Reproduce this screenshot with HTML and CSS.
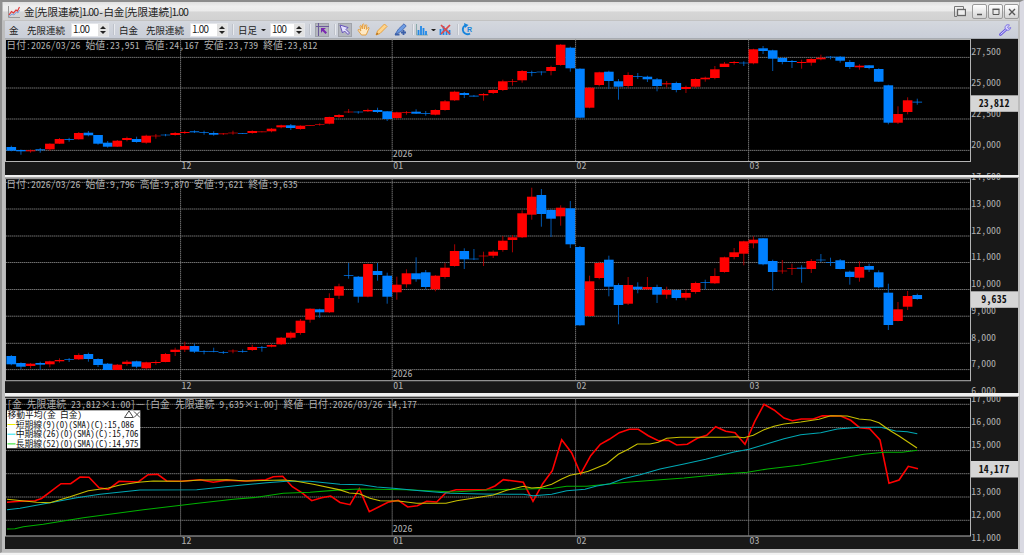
FILE: index.html
```html
<!DOCTYPE html>
<html lang="ja">

<head>
    <meta charset="UTF-8">
    <title>金[先限連続]1.00 - 白金[先限連続]1.00</title>
    <link rel="stylesheet" href="styles.css">
</head>

<body>
    <div class="window">
        <div class="titlebar">
            <svg class="app-icon" width="12" height="12" viewBox="0 0 12 12">
                <path d="M.5 0V11.5H12" fill="none" stroke="#999" />
                <path d="M1 9L3.5 5.5L5.5 7L8 4L9.5 5L11.5 1" fill="none" stroke="#e03838" stroke-width="1.2" />
                <path d="M1 10.5L4 8L6 9L8.5 6L10 7L11.5 4" fill="none" stroke="#7aa0e0" />
            </svg>
            <span class="title">金<b>[</b>先限連続<b>]1.00 - </b>白金<b>[</b>先限連続<b>]1.00</b></span>
            <svg class="dup" width="12" height="12" viewBox="0 0 12 12">
                <path d="M3 10.5H.5V.5H9.5V3" fill="none" stroke="#777" />
                <rect x="3.5" y="3.5" width="8" height="6" fill="#eee" stroke="#666" stroke-width="1.3" />
            </svg>
            <span class="win-btn"><svg width="12" height="12" viewBox="0 0 12 12"><path d="M3 8.5H8" stroke="#555" stroke-width="1.5" /></svg></span>
            <span class="win-btn"><svg width="12" height="12" viewBox="0 0 12 12"><path d="M3 3.5H9V8.500H3Z" fill="none" stroke="#555" /><path d="M2.5 3.3H9.5" stroke="#555" stroke-width="1.5" /></svg></span>
            <span class="win-btn"><svg width="12" height="12" viewBox="0 0 12 12"><path d="M3 3L9 9M9 3L3 9" stroke="#555" stroke-width="1.4" /></svg></span>
        </div>

        <div class="toolbar">
            <span class="label l1">金</span>
            <span class="label l2">先限連続</span>
            <span class="spin">1.00<i></i></span>
            <span class="sep"></span>
            <span class="label l3">白金</span>
            <span class="label l2">先限連続</span>
            <span class="spin">1.00<i></i></span>
            <span class="sep"></span>
            <span class="label l4">日足</span>
            <span class="caret"></span>
            <span class="spin wide">100<i></i></span>
            <span class="sep"></span>
            <span class="tool on"><svg width="13" height="13" viewBox="0 0 13 13"><path d="M0 3.5H13M2.5 0V13" stroke="#6b5a9a" /><path d="M5 5H10L8 6.5L11 9.5L9.5 11L6.5 8L5 10Z" fill="#7a28b0" /></svg></span>
            <span class="sep"></span>
            <span class="tool on"><svg width="13" height="13" viewBox="0 0 13 13"><path d="M2 2L10 4.5L8 6.5L11.5 10L10 11.5L6.5 8L4.5 10Z" fill="#e4e0ff" stroke="#6552b8" /></svg></span>
            <span class="tool"><svg width="13" height="13" viewBox="0 0 13 13"><path d="M4.5 12L1.2 7.500Q.8 6.2 2.2 6.5L3.8 8L3 3Q3.5 1.8 4.5 3L5.3 6L5.5 1.5Q6.3 .3 7 1.5L7.3 6L8.5 2Q9.4 1.2 9.8 2.3L9.3 6.5L11 4.5Q12 4 12 5.2L10 10L9 12Z" fill="#ffe9c4" stroke="#e39a35" stroke-width=".9" /></svg></span>
            <span class="tool"><svg width="13" height="13" viewBox="0 0 13 13"><path d="M1 12L2.5 8L9.5 1L12 3.5L5 10.5Z" fill="#ffd48a" stroke="#e39a35" stroke-width=".9" /><path d="M1 12L2 9.5L3.5 11Z" fill="#a86a20" /></svg></span>
            <span class="tool"><svg width="13" height="13" viewBox="0 0 13 13"><path d="M1 11.5L4.5 6L10 .8L12.2 3L7 8.5Z" fill="#6c9ce4" stroke="#4468b0" stroke-width=".9" /><path d="M1 11.5H5.5M9.5 7V12M7 9.5H12" stroke="#3c60a8" stroke-width="1.8" /></svg></span>
            <span class="sep"></span>
            <span class="tool"><svg width="13" height="13" viewBox="0 0 13 13"><path d="M.5 1V12H12" fill="none" stroke="#8aa" /><path d="M2.5 12V7M5 12V3M7.5 12V5M10 12V8" stroke="#2088e8" stroke-width="1.8" /></svg></span>
            <span class="caret near"></span>
            <span class="tool"><svg width="13" height="13" viewBox="0 0 13 13"><path d="M1.5 12V6M4.5 12V3M7.5 12V5M10.5 12V7" stroke="#2088e8" stroke-width="1.8" /><path d="M2 2L11 11M11 2L2 11" stroke="#e04848" stroke-width="1.7" /></svg></span>
            <span class="sep"></span>
            <span class="tool"><svg width="13" height="13" viewBox="0 0 13 13"><path d="M4 2.5A4.6 4.6 0 1 0 9 10.5" fill="none" stroke="#1684dc" stroke-width="1.9" /><path d="M3 0L7.5 2L4 5Z" fill="#1684dc" /><text class="r" x="6" y="9">R</text></svg></span>
            <svg class="wrench" width="13" height="12" viewBox="0 0 13 12"><path d="M1.5 10.5L7 5.5" stroke="#6a5ae0" stroke-width="2.8" stroke-linecap="round" /><path d="M1.5 10.5L7 5.5" stroke="#ddd8ff" /><path d="M10.5 1.2A2.8 2.8 0 1 0 11.7 3.5L9.5 4.5L8.5 3Z" fill="#d8d4ff" stroke="#7466e0" stroke-width=".9" /></svg>
        </div>

        <svg class="panel" id="gold" width="1013" height="136" viewBox="5 39 1013 136"></svg>
        <div class="split"></div>
        <svg class="panel" id="platinum" width="1013" height="215" viewBox="5 178 1013 215"></svg>
        <div class="split"></div>
        <svg class="panel" id="spread" width="1013" height="152" viewBox="5 397 1013 152"></svg>
    </div>

    <script src="chart.js"></script>
</body>

</html>
```
FILE: styles.css
```css
* {
    box-sizing: border-box;
}

body {
    margin: 0;
    width: 1024px;
    height: 555px;
    overflow: hidden;
    background: #f2f2f2;
    font-family: "Noto Sans CJK JP", sans-serif;
    color: #222;
}

.window {
    height: 553px;
    padding: 0 1px 4px 1px;
    border-top: 2px solid #8c8c8c;
    border-left: 2px solid #909090;
    border-right: 4px solid #d9d9e2;
    border-bottom: 1px solid #c8c8c8;
    background: #bdbdbd;
    display: flex;
    flex-direction: column;
}

.titlebar {
    height: 19px;
    flex: none;
    display: flex;
    align-items: center;
    padding: 1px 0 0 5px;
    background: linear-gradient(#e0e0e0, #efefef 25%, #ebebeb 50%, #d6d6d6 55%, #d2d2d2);
    border-bottom: 1px solid #c2c2c2;
}

.title {
    margin-left: 4px;
    flex: 1;
    font-size: 10.5px;
    line-height: 16px;
    white-space: nowrap;
}

.title b {
    font-weight: normal;
    letter-spacing: -1px;
}

.dup {
    margin-right: 5px;
}

.win-btn {
    width: 15px;
    height: 15px;
    margin-left: 1px;
    border: 1px solid #999;
    border-radius: 2px;
    background: linear-gradient(#fff, #d4d4d4);
    display: flex;
    align-items: center;
    justify-content: center;
}

.toolbar {
    height: 18px;
    flex: none;
    margin: 0 1px 0 2px;
    padding-left: 4px;
    display: flex;
    align-items: center;
    background: linear-gradient(#d4d7de, #c9ced8);
    border-bottom: 1px solid #a8acb2;
    font-size: 9.5px;
}

.label {
    white-space: nowrap;
    line-height: 14px;
}

.l1 {
    width: 18px;
}

.l2 {
    width: 44px;
}

.l3 {
    width: 27px;
}

.l4 {
    width: 23px;
}

.spin {
    position: relative;
    width: 38px;
    height: 14px;
    padding-left: 1px;
    background: #fff;
    border: 1px solid #e4e6ea;
    line-height: 11px;
    font-size: 9.8px;
    letter-spacing: -.7px;
}

.spin i {
    position: absolute;
    right: 0;
    top: 0;
    width: 10px;
    height: 12px;
    background: #e2e2e2;
}

.spin i::before,
.spin i::after {
    content: "";
    position: absolute;
    left: 2px;
    border: 3px solid transparent;
}

.spin i::before {
    top: -1px;
    border-bottom-color: #222;
}

.spin i::after {
    bottom: -1px;
    border-top-color: #222;
}

.spin.wide {
    width: 35px;
}

.sep {
    width: 2px;
    height: 11px;
    margin: 0 4px;
    background: #e8eaee;
    border-left: 1px solid #bfc3cb;
}

.tool + .sep {
    margin: 0 2px 0 0;
}

.caret {
    width: 5px;
    border: 2.5px solid transparent;
    border-top-color: #222;
    border-bottom: 0;
    margin-right: 4px;
}

.caret.near {
    margin: 0 2px 0 -3px;
}

.tool {
    width: 14px;
    height: 14px;
    margin-right: 4.5px;
    display: flex;
    align-items: center;
    justify-content: center;
}

.tool.on {
    background: #b4b7be;
    box-shadow: 0 0 0 1px #a0a3aa inset;
}

.wrench {
    margin-left: auto;
    margin-right: 6px;
}

.panel {
    display: block;
    flex: none;
    margin-left: 2px;
    background: #181818;
}

.split {
    height: 3px;
    flex: none;
    margin-left: 2px;
    background: #f0f0f0;
    border-bottom: 1px solid #a8a8a8;
}

#platinum + .split {
    height: 4px;
}

.plot {
    fill: #000;
    stroke: #b4b4b4;
}

.grid {
    stroke: #7c7c7c;
    stroke-dasharray: 1.5 .5;
    stroke-width: .9;
}

text {
    font-family: "Noto Sans Mono CJK JP", "Noto Sans CJK JP", monospace;
    font-size: 9.8px;
    fill: #b0b0b0;
}

text.r {
    font: bold 7px "Liberation Sans", sans-serif;
    fill: #1684dc;
}

.up {
    fill: #f00;
}

.down {
    fill: #0080ff;
}

.wick-up {
    stroke: #a80000;
}

.wick-down {
    stroke: #0058b0;
}

.tag {
    fill: #d6d6d6;
}

.tag-text {
    font-weight: bold;
    fill: #111;
}

.line {
    fill: none;
    stroke-width: 1.1;
}

.diff {
    stroke: #f00;
    stroke-width: 1.6;
}

.short {
    stroke: #c8c000;
}

.mid {
    stroke: #00a8b4;
}

.long {
    stroke: #00b000;
}

.legend {
    fill: #fff;
}

.legend-text {
    font-size: 8.8px;
    fill: #111;
}

.key-short {
    stroke: #f0f000;
}

.key-mid {
    stroke: #20e0f0;
}

.key-long {
    stroke: #20e020;
}

.mark {
    fill: none;
    stroke: #333;
    stroke-width: .9;
}
```
FILE: chart.js
```js
const FIRST = 11.3;
const STEP = 9.638;
const HALF = 4.94; // half-width cell
const months = [[180.6, '12'], [392.2, '01'], [575.6, '02'], [748.6, '03']];

// u/d, body top, body bottom, wick top, wick bottom
const gold = `d 147 150.7 145.7 151.3|d 150 151.3 149.5 154.7|u 150.3 151.3 149.5 152.7|d 149.3 150.3 148 152.7|u 143.7 149.3 143.3 150.7
u 139 143.7 138 144|d 139 139.8 137.8 141.7|u 133 139.3 132 139.7|d 132.7 135.3 131 136.3|d 135 143.7 135 144.7
d 142.7 146.7 141 147.7|u 140.7 146.7 140 147|u 138 140 136.7 141.3|d 139 142 136.7 142.7|u 135.7 142.7 134.7 143.7
u 135.7 136.3 134 138.7|d 134.7 135.3 134 136.3|u 133 135 132 135.7|u 132 133 130.7 134|d 131.3 132.3 130.3 133
d 132.3 133 130.7 134.7|d 133 134.7 131.3 135.7|u 133.5 134.2 133 135|u 132.7 133.3 130.7 134.7|d 133 133.7 133 134
u 131 133 130.3 133.7|u 131.5 132.2 131.3 132.3|u 128.7 131.3 128 132.3|u 125.3 127.3 124.7 128.3|d 125.3 128 124 130
u 125.7 129 125.3 129.7|u 125 125.7 125 125.7|u 124.3 124.9 123.3 125.7|u 117 123.7 116.7 124.3|u 115 117 114 118
u 111.7 112.3 109 113|d 111.7 112.3 111.3 113.7|u 110 111.3 108.7 112|d 110 112 107.7 113|d 111.3 119 111 121
u 112.3 118 111.7 119.3|u 112 112.7 111 114.7|d 111.7 113.7 109.3 114|d 113 113.7 111 115.7|u 110 114.7 109.3 115.3
u 101.3 110 100 110.7|u 91.7 100.3 90.7 101|d 93 95 92 98|d 95.7 96.5 95 96.7|u 94 95.3 93 100.7
u 90 93 89.3 94|u 81.3 90 79.7 91|u 81 81.7 79 85.7|u 71 80.3 70 82.7|d 72.3 73 70.7 76.3
d 71.7 72.3 71.3 75.3|u 67 71 65.7 75.3|u 44.7 65 44 65.7|d 47.7 68.3 46.7 71.7|d 68.7 117.7 68.3 118
u 87.7 107.7 87.3 108.3|u 72.3 85 71.7 86.3|d 71.7 81 70.7 89|d 81.3 86.7 79 99.7|u 75 86 72.3 88
d 76.3 77 73 79|d 76.7 79.3 75.7 82|d 79.3 86 78 91.3|u 83.3 84.3 81 87.7|d 83 90 81.7 92.3
u 87 89 85.7 93|u 79 86.7 78.3 88|u 77.7 79.3 76.7 81.7|u 69.3 78 66 79.3|u 63.7 67 62 67
u 62 63 61 64.7|d 62.7 63.3 61.3 66|u 49.3 63.3 48.7 64.3|d 48.3 51 46 54|d 50.3 58.7 49.7 71
d 58 62 57 64.3|d 61 62 60 68|u 62 63 59.7 68.7|u 59 62.7 58 65.7|u 57.7 59.3 54.7 60.3
d 56.7 57.3 56 59.3|d 56.7 60.7 56 62.7|d 62 67 60 69|u 65.7 67.3 64.3 69.7|d 65.3 68 65 69.3
d 69 81.7 68.3 82|d 85.3 122.7 84.7 124.3|u 114 122.7 106.3 124|u 100.3 112 97.3 114.3|d 101.7 102.5 98.7 104.7`;

const platinum = `d 356 364.3 355 365.3|d 363 366.7 362.3 369.3|u 363.7 366 363 368.3|d 363 364.7 361.7 370|u 361.3 364.3 360.7 367.3
u 360 361.3 358.3 362.7|d 359.3 360 358 362|u 355 359.3 353.3 360|d 354 359 352.7 361.7|d 359 365 358.3 367
d 363.7 370 363 370|u 364.7 370 364 370|u 361.7 364 360 365.7|d 361.3 366.7 360.7 368.3|u 362.3 368.3 361.7 369.3
u 362 363 360.3 364.7|u 354 362 353 362.3|u 349.7 352 347.7 356|u 346 349.7 341.7 352|d 346 351.7 343.7 353
d 351.3 352 350.3 354.3|d 351.3 352 347.7 352.3|d 352.3 353 351 354|u 350.7 351.3 349.3 353.3|d 351.3 352 349.5 352.7
u 347 350 344.7 351|d 347 347.7 346 351.7|u 345 346.7 344 347.3|u 337.7 344.3 337 345|u 332.7 337.7 331.3 339.3
u 320.7 333 319 334.7|u 308.7 319.7 308.3 322.7|d 309.3 312.3 308.7 317.7|u 298 312.3 293.3 313|u 286.3 295.7 283.7 299
d 275 275.7 263 278.7|d 276.7 296.7 276 302.7|u 264 296.7 263.5 297.3|d 271 275 263 280.7|d 275.7 296.7 272.7 303.7
u 284.7 292.3 276.7 299.7|u 273.3 284.3 269.3 287.7|d 273.3 279.3 257.3 281.7|d 272.3 287 270 289.3|u 275.7 289.3 275 291.3
u 267.7 277 263 278.7|u 251 266 244.3 266.7|d 251 259.3 248.3 269|d 258.7 259.3 249 260|u 255.7 256.3 251.7 266
u 251.7 255.7 250.3 258|u 240.7 250 236 251.7|u 237.3 240 235 252.3|u 213.3 237.3 210.3 238|u 196.7 214.7 187.7 219.7
d 195 214 189 226.7|d 210 218.7 209.3 237|u 207.7 216.3 205.3 225.7|d 208.3 244.3 201 248|d 247 325.3 246 325.7
u 281.3 316 275.7 317|u 263 278 261.7 279.3|d 259.7 286.7 255.7 296.3|d 285 305 283.3 324.3|u 285 303.7 277 305
d 286.7 289.3 282.3 293.3|u 287 289.3 277 290|d 287 294.7 284.7 303|u 290 294.7 286.7 298.7|d 290 298 289.7 300.3
u 293 297.7 289.7 300.3|u 283 292 281.7 293.7|d 282 282.7 279.7 289.3|u 276 283.3 268.3 284|u 257.3 272 256.7 272.7
u 252.3 257 248 259.3|u 241.3 253.7 240.7 265.3|u 239.7 243.3 236.3 248.3|d 238.3 264.3 238 265.3|d 261 272 259.7 290.7
u 270.7 271.3 260 273.7|u 268 268.7 263.7 275|d 267.7 268.7 265.3 282.7|u 261 269 259 273|d 259.7 260.3 254 262
d 262.3 263 257.7 266|d 260.3 269 259 269.3|d 271.7 277 270.7 284.7|u 267 277.7 261.3 281.7|d 266 269.7 263.7 272
d 272.3 287.3 270.3 288.3|d 292.7 325 283.7 330|u 309.3 321 302 321.3|u 296 306.7 291 310|d 295 299 293.7 299.7`;

const diff = '7,502.3 20,501.3 35,500.7 41.5,498.5 61,483.7 70.7,483.7 80,477 89,477.3 99,487.7 108.3,489.3 119,481.3 138.3,482 148,474.7 157.7,474.3 166.7,481 181.7,481.3 200,479.7 213.3,482.3 226.7,480.3 245,481 265.7,479.7 273.3,476.7 282.7,476.3 292.3,486.7 301.7,492.7 311.7,500.7 321.7,497.7 330.7,496 340,502.5 350,504.7 359.3,488.7 369.3,511.7 388,502.3 398.3,500.3 407.7,507 417.3,505.7 426.7,501.3 436.7,502 446,492.7 456,489.7 486,489.7 495,486 503.3,479.7 523.3,482.3 533,501.3 542.7,483.7 552.3,470.7 561.7,439.7 571.7,453 580.7,474 590.7,455.7 600.3,444.3 609.3,439.3 619.3,432.7 629.3,429.3 638.3,429.3 648.3,435.7 658.3,440.7 668.3,440.3 676.7,445 687.3,444.3 697.3,438.3 706.7,435.3 715.7,426.7 725.7,431.3 735,432.7 745,444.3 754.7,421.7 764,404.3 774,410 784,418 792.3,420.7 801.3,419 813.3,419 822.3,415.7 840.7,416 850.7,420.3 859.7,427.7 869.7,428.7 880,440 889,483.3 899,480 908.3,466.3 918,468.7';
const short = '7,499.3 36.7,502.3 50,502.7 70,496.7 88.3,490.7 108.3,488 120,485 138.3,482.3 153.3,481 181.7,481.3 200,480 226.7,479.7 246.7,481 283.3,480 295,481 313.3,484.3 340,489.9 349.3,493 359.3,493.7 370,498.3 380,500.7 398.3,501 416.7,503.3 446,503.3 456.7,500.7 493.3,495 506.7,490.3 523.3,486.3 531.7,488 541.7,487.3 551.7,484.3 561.7,479 570,475.3 580.7,473.3 588.3,471.3 606.7,463.7 618.3,454.3 628.3,449.3 637.3,444 650,444 658.3,442.3 666.7,438.3 680,437.3 725.7,437.3 735.7,436.7 744,437.7 753.3,435.3 764,429.7 774,426.3 784,424 800.7,422 819,419.3 830.7,415.7 847.3,416 859,419 870.7,420 879,422.7 890.7,431 899,436 917,448';
const mid = '7,509.7 20,508.3 50,502.7 76.7,497.7 100,494.3 140,490 196.7,489.7 240,485.3 266.7,482.7 286.7,481.3 310,481.3 340,484.3 361.7,484.7 376.7,487 393.3,488.3 420,490.7 450,493.3 483.3,494 523.3,494.3 533.3,495.7 551.7,494.3 566.7,490.7 585,489.3 596.7,486 610,483.7 623.3,478.7 640,474.7 660,469 684,464 705.7,459.3 734,452 749,449.3 764,444.7 784,438.7 800.7,434.7 820.7,432.7 837.3,429 859,427.3 880.7,427.3 895.7,431 907.3,431.7 917.3,433.7';
const long = '7,529 15,528.7 23.3,526.7 43.3,524.3 83.3,517.7 143.3,509.7 200,503 233.3,499.3 256.7,497.3 283.3,493.3 310,492.3 340,489.9 360,489 406.7,489.7 453.3,492 486.7,490 553.3,488.3 566.7,486.3 586.7,486.3 626.7,482.3 684,478 727.3,473.7 747.3,472.3 767.3,469 800.7,465 864,454.3 884,452.3 902.3,452.3 917.3,450.3';

// full-width characters take two cells
const cells = s => [...s].reduce((n, c) => n + (c.charCodeAt(0) > 0x7f ? 2 : 1), 0);

const text = (x, y, s, cls = '', w = HALF) =>
    `<text x="${x}" y="${y}" class="${cls}" textLength="${cells(s) * w}" xml:space="preserve">${s}</text>`;

function frame(top, bottom, rows, labels) {
    let out = `<rect class="plot" x="5.5" y="${top}" width="965" height="${bottom - top}"/>`;
    rows.forEach(y => out += `<line class="grid" x1="6" x2="970" y1="${y}" y2="${y}"/>`);
    months.forEach(([x, name]) => {
        out += `<line class="grid" x1="${x}" x2="${x}" y1="${top}" y2="${bottom}"/>`;
        out += text(x + 1, bottom + 7.8, name);
    });
    out += text(392.7, bottom - 4.2, '2026');
    labels.forEach(([y, s]) => out += text(971.3, y + 3, s));
    return out;
}

function candles(data) {
    return data.split(/[|\n]/).map((row, i) => {
        const [dir, top, bottom, high, low] = row.split(' ');
        const kind = dir === 'u' ? 'up' : 'down';
        const x = FIRST + i * STEP;
        return `<line class="wick-${kind}" x1="${x}" x2="${x}" y1="${high}" y2="${low}"/>` +
            `<rect class="${kind}" x="${x - 4.8}" y="${top}" width="9.6" height="${bottom - top}"/>`;
    }).join('');
}

const tag = (y, s) => `<rect class="tag" x="971" y="${y - 8}" width="47" height="16.5"/>` +
    text(994 - cells(s) * 2.55, y + 3.5, s, 'tag-text', 5.1);

const line = (cls, points) => `<polyline class="line ${cls}" points="${points}"/>`;

document.getElementById('gold').innerHTML =
    frame(39.5, 161.5, [57.4, 88, 119, 150.4], [[52, '27,500'], [82.7, '25,000'], [114, '22,500'], [145, '20,000'], [176.5, '17,500']]) +
    candles(gold) + tag(103.3, '23,812') +
    text(6.3, 49, '日付:2026/03/26 始値:23,951 高値:24,167 安値:23,739 終値:23,812');

document.getElementById('platinum').innerHTML =
    frame(178.7, 380.7, [182.4, 209, 236, 262.5, 289.5, 316.2, 343.3, 369.6],
        [[177, '14,000'], [203.5, '13,000'], [230.5, '12,000'], [257, '11,000'], [284.3, '10,000'], [310.7, '9,000'], [337.7, '8,000'], [364.3, '7,000'], [391.3, '6,000']]) +
    candles(platinum) + tag(299.3, '9,635') +
    text(6.3, 188.3, '日付:2026/03/26 始値:9,796 高値:9,870 安値:9,621 終値:9,635');

const keys = [['short', '短期線(9)(0)(SMA)(C):15,086'], ['mid', '中期線(26)(0)(SMA)(C):15,706'], ['long', '長期線(52)(0)(SMA)(C):14,975']];

document.getElementById('spread').innerHTML =
    frame(398.3, 536, [404.3, 427.5, 450.6, 473.7, 497, 520.3],
        [[399, '17,000'], [422, '16,000'], [445.3, '15,000'], [491.7, '13,000'], [515, '12,000'], [538, '11,000']]) +
    line('diff', diff) + line('long', long) + line('mid', mid) + line('short', short) + tag(469, '14,177') +
    text(7, 407.8, '[金 先限連続 23,812×1.00]－[白金 先限連続 9,635×1.00] 終値 日付:2026/03/26 14,177') +
    '<rect class="legend" x="7" y="410.3" width="133.3" height="38"/>' +
    text(7.5, 418, '移動平均(金 白金)', 'legend-text', 4.38) +
    '<path class="mark" d="M124.5 417.5L129 410.8L133.3 417.5ZM134 411.5L140 417.5M140 411.5L134 417.5"/>' +
    keys.map(([k, s], i) => `<line class="key-${k}" x1="7.5" x2="15.5" y1="${424.5 + i * 9.7}" y2="${424.5 + i * 9.7}"/>` +
        text(15.8, 427.5 + i * 9.7, s, 'legend-text', 4.38)).join('');
```
